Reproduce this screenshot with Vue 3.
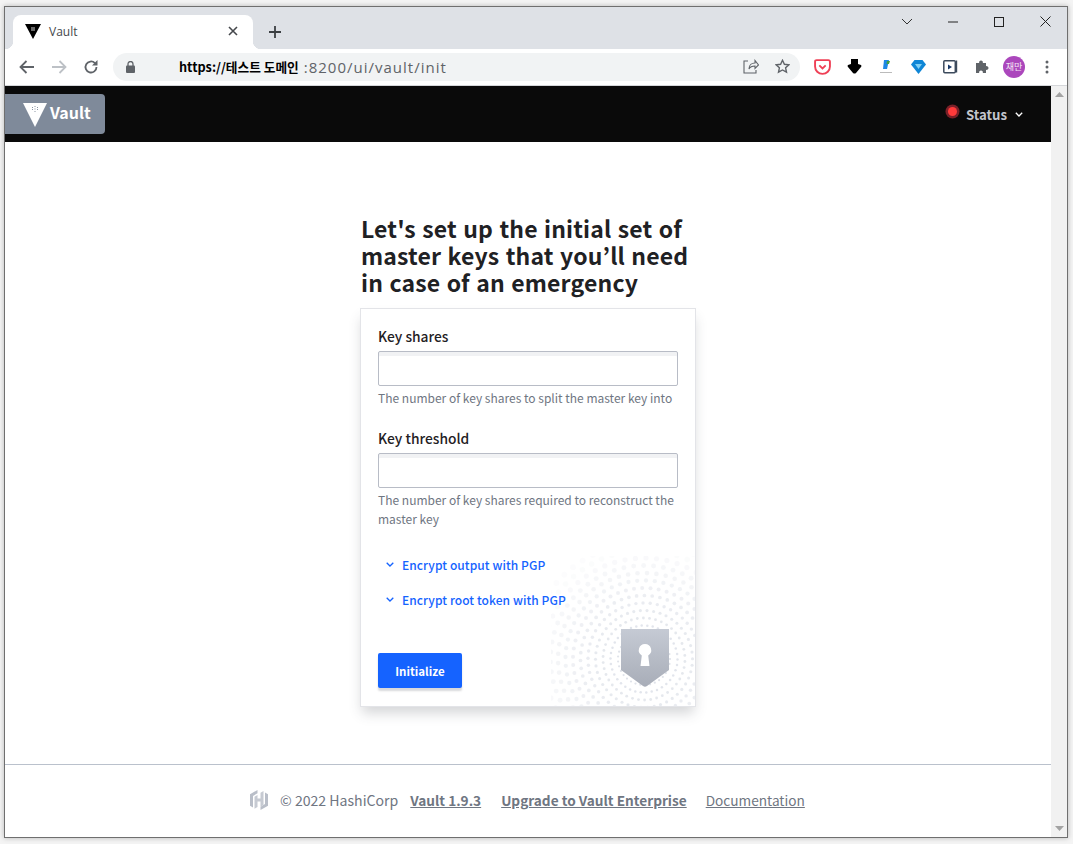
<template>
  <div class="screen">
    <div class="window">
      <!-- browser chrome -->
      <div class="tabstrip">
        <div class="tab">
          <svg class="favicon" width="16" height="16" viewBox="0 0 16 16">
            <path d="M0 1h16L8 16z" fill="#000" />
            <rect x="6" y="4" width="4" height="4" fill="#666" />
          </svg>
          <span class="tab-title">Vault</span>
          <svg class="tab-close" width="10" height="10" viewBox="0 0 10 10">
            <path d="M1 1l8 8M9 1l-8 8" stroke="#45484c" stroke-width="1.6" />
          </svg>
        </div>
        <svg class="new-tab" width="14" height="14" viewBox="0 0 14 14">
          <path d="M7 1v12M1 7h12" stroke="#3c4043" stroke-width="1.8" />
        </svg>
        <div class="win-controls">
          <svg width="12" height="8" viewBox="0 0 12 8"><path d="M1 1l5 5 5-5" fill="none" stroke="#333" /></svg>
          <svg width="10" height="10" viewBox="0 0 10 10"><path d="M0 5h10" stroke="#222" /></svg>
          <svg width="10" height="10" viewBox="0 0 10 10"><rect x=".5" y=".5" width="9" height="9" fill="none" stroke="#222" /></svg>
          <svg width="11" height="11" viewBox="0 0 11 11"><path d="M.5.5l10 10M10.5.5l-10 10" stroke="#222" /></svg>
        </div>
      </div>
      <div class="toolbar">
        <div class="nav-buttons">
          <svg width="16" height="14" viewBox="0 0 16 14"><path d="M15 7H2M7.500 1L1.500 7l6 6" fill="none" stroke="#5f6368" stroke-width="1.800" /></svg>
          <svg width="16" height="14" viewBox="0 0 16 14"><path d="M1 7h13M8.500 1l6 6-6 6" fill="none" stroke="#bdc1c6" stroke-width="1.800" /></svg>
          <svg width="16" height="16" viewBox="0 0 16 16"><path d="M13.500 8a5.500 5.500 0 1 1-1.600-3.900" fill="none" stroke="#5f6368" stroke-width="1.800" /><path d="M14.500 1v5.500H9z" fill="#5f6368" /></svg>
        </div>
        <div class="urlbar">
          <svg width="9" height="12" viewBox="0 0 9 12"><rect y="4.500" width="9" height="7.500" rx="1" fill="#5f6368" /><path d="M2 5V3a2.500 2.500 0 0 1 5 0v2" fill="none" stroke="#5f6368" stroke-width="1.300" /></svg>
          <span class="url-host">https://테스트 도메인</span>
          <span class="url-path">:8200/ui/vault/init</span>
          <svg class="url-share" width="16" height="15" viewBox="0 0 16 15"><path d="M5 2H1v12h12v-3M6 10c0-4 3-6 6-6V1.500L15.500 6 12 9.500V7c-3 0-5 1-6 3z" fill="none" stroke="#5f6368" stroke-width="1.100" /></svg>
          <svg class="url-star" width="15" height="15" viewBox="0 0 15 15"><path d="M7.500 1.300l1.900 4 4.400.5-3.200 3 .9 4.400-4-2.200-4 2.200.9-4.400-3.200-3 4.400-.5z" fill="none" stroke="#5f6368" stroke-width="1.400" /></svg>
        </div>
        <div class="extensions">
          <svg width="17" height="16" viewBox="0 0 16 15"><path d="M1 2.500q0-1.500 1.500-1.500h11q1.500 0 1.500 1.500V7a7 7 0 0 1-14 0z" fill="none" stroke="#ef4056" stroke-width="1.800" /><path d="M5 6l3 2.800L11 6" fill="none" stroke="#ef4056" stroke-width="1.800" /></svg>
          <svg width="15" height="15" viewBox="0 0 15 15"><path d="M4 0h7v5l3 1q1 1 0 2l-5 6q-1.500 1-3 0L1 8q-1-1 0-2l3-1z" fill="#000" /></svg>
          <svg width="14" height="16" viewBox="0 0 14 16"><path d="M5 1h5L8 10H4z" fill="#1e88e5" /><path d="M8 2h3l-1 3H7.500z" fill="#43a047" /><path d="M1 13h12v1H1z" fill="#bbb" /></svg>
          <svg width="15" height="14" viewBox="0 0 15 14"><path d="M3.500 0h8L15 4.500 7.500 14 0 4.500z" fill="#0f86d6" /><path d="M4 4h7L7.500 9z" fill="#7fd0f5" /></svg>
          <svg width="15" height="15" viewBox="0 0 15 15"><rect x=".8" y="1.800" width="11.500" height="12" rx="1" fill="none" stroke="#3c4a5c" stroke-width="1.500" /><path d="M13 1.500h1.200v12H13z" fill="#3c4a5c" /><path d="M5 5.500l4 2.500-4 2.500z" fill="#1a3a6a" /></svg>
          <svg width="15" height="15" viewBox="0 0 15 15"><path d="M1 4h3.200a1.900 1.900 0 1 1 3.600 0H11v3.200a1.900 1.900 0 1 1 0 3.600V14H7.800a1.900 1.900 0 1 0-3.600 0H1z" fill="#5f6368" /></svg>
          <div class="avatar">재만</div>
          <svg width="4" height="14" viewBox="0 0 4 14"><circle cx="2" cy="2" r="1.500" fill="#5f6368" /><circle cx="2" cy="7" r="1.500" fill="#5f6368" /><circle cx="2" cy="12" r="1.500" fill="#5f6368" /></svg>
        </div>
      </div>

      <div class="viewport">
        <div class="page">
          <header class="navbar">
            <a class="brand">
              <svg width="24" height="24" viewBox="0 0 24 24">
                <path d="M0 0h24L12 24z" fill="#fff" />
                <g fill="#8a94a3">
                  <rect x="9" y="4" width="1" height="1" /><rect x="11.500" y="3" width="1" height="1" /><rect x="14" y="4" width="1" height="1" />
                  <rect x="9" y="6" width="1" height="1" /><rect x="11.500" y="5.500" width="1" height="1" /><rect x="14" y="6" width="1" height="1" />
                  <rect x="11.500" y="8" width="1" height="1" />
                </g>
              </svg>
              <span>Vault</span>
            </a>
            <div class="status">
              <span class="status-dot"></span>
              <span class="status-label">Status</span>
              <svg width="8" height="5" viewBox="0 0 8 5"><path d="M.8.800L4 4 7.200.800" fill="none" stroke="#fff" stroke-width="1.300" /></svg>
            </div>
          </header>

          <main class="main">
            <div class="column">
              <h1 class="title">Let's set up the initial set of master keys that you’ll need in case of an emergency</h1>
              <form class="card" @submit.prevent>
                <svg class="dots" width="144" height="150" viewBox="0 0 144 150">
                  <circle v-for="(d, i) in dots" :key="i" :cx="d.x" :cy="d.y" :r="d.r" :fill="d.fill" />
                </svg>
                <svg class="shield" width="48" height="58" viewBox="0 0 48 58">
                  <defs>
                    <linearGradient id="shieldFill" x1="0" y1="0" x2="0" y2="1">
                      <stop offset="0" stop-color="#c5cad4" />
                      <stop offset="1" stop-color="#a8adb8" />
                    </linearGradient>
                  </defs>
                  <path d="M0 0h48v41L26 57q-2 1.400-4 0L0 41z" fill="url(#shieldFill)" />
                  <path d="M24 15a6.200 6.200 0 0 1 3.200 11.500L28.500 37h-9l1.300-10.500A6.200 6.200 0 0 1 24 15z" fill="#fff" />
                </svg>

                <label class="field-label" for="shares">Key shares</label>
                <input id="shares" class="input" type="text" />
                <p class="help">The number of key shares to split the master key into</p>

                <label class="field-label second" for="threshold">Key threshold</label>
                <input id="threshold" class="input" type="text" />
                <p class="help">The number of key shares required to reconstruct the master key</p>

                <div class="toggles">
                  <a v-for="t in toggles" :key="t" class="toggle">
                    <svg width="8" height="5" viewBox="0 0 8 5"><path d="M.7.700L4 4 7.300.700" fill="none" stroke="#1563ff" stroke-width="1.300" /></svg>
                    {{ t }}
                  </a>
                </div>

                <button class="submit" type="submit">Initialize</button>
              </form>
            </div>
          </main>

          <footer class="footer">
            <svg width="18" height="20" viewBox="0 0 18 20">
              <path d="M7.500 0L0 4.300v11.400l3 1.700V5.900l4.500-2.600zM10.500 20l7.500-4.300V4.300l-3-1.700v11.500l-4.500 2.600z" fill="#b9bec8" />
              <path d="M7.500 5v3.500h3V2.800l3-1.700V15l-3 1.800v-5.300h-3V17l-3 1.800V6.800z" fill="#c6cad2" />
            </svg>
            <span class="copyright">© 2022 HashiCorp</span>
            <a class="foot-link strong version">Vault 1.9.3</a>
            <a class="foot-link strong upgrade">Upgrade to Vault Enterprise</a>
            <a class="foot-link docs">Documentation</a>
          </footer>
        </div>
        <div class="scrollbar">
          <svg width="9" height="5" viewBox="0 0 9 5"><path d="M4.500 0L9 5H0z" fill="#a3a3a3" /></svg>
          <svg width="9" height="5" viewBox="0 0 9 5"><path d="M0 0h9L4.500 5z" fill="#a3a3a3" /></svg>
        </div>
      </div>
    </div>
  </div>
</template>

<script setup>
const toggles = ['Encrypt output with PGP', 'Encrypt root token with PGP']

// concentric rings of dots behind the shield, fading outwards
const cx = 93
const cy = 103
const dots = []
for (let ring = 0; ring < 13; ring++) {
  const radius = 26 + ring * 7.5
  const count = Math.round((2 * Math.PI * radius) / (5 + ring * 0.55))
  for (let n = 0; n < count; n++) {
    const a = (n / count) * Math.PI * 2 + ring * 0.18
    const x = cx + Math.cos(a) * radius
    const y = cy + Math.sin(a) * radius
    if (x < -3 || x > 146 || y < -3 || y > 153) continue
    const fade = Math.max(0.1, 1 - ring / 12.5)
    dots.push({
      x: +x.toFixed(1),
      y: +y.toFixed(1),
      r: +(1.1 + ring * 0.15).toFixed(2),
      fill: `rgba(224, 227, 234, ${fade.toFixed(2)})`
    })
  }
}
</script>

<style scoped>
.screen {
  width: 1073px;
  height: 844px;
  box-sizing: border-box;
  padding: 6px 0 0 4px;
  background: #f4f4f4;
  overflow: hidden;
  font-family: "Noto Sans CJK KR", "Noto Sans", sans-serif;
}

.window {
  width: 1064px;
  height: 832px;
  box-sizing: border-box;
  border: 1px solid #6f6f6f;
  box-shadow: 0 0 5px rgba(0, 0, 0, 0.25);
  display: flex;
  flex-direction: column;
  background: #fff;
}

.tabstrip {
  height: 42px;
  flex: none;
  background: #dee1e6;
  display: flex;
  align-items: flex-end;
  padding-left: 8px;
}

.tab {
  position: relative;
  width: 240px;
  height: 34px;
  box-sizing: border-box;
  padding: 0 15px 2px 12px;
  background: #fff;
  border-radius: 8px 8px 0 0;
  display: flex;
  align-items: center;
}

.tab::before,
.tab::after {
  content: "";
  position: absolute;
  bottom: 0;
  width: 8px;
  height: 8px;
}

.tab::before {
  left: -8px;
  background: radial-gradient(circle at 0 0, #dee1e6 8px, #fff 8.5px);
}

.tab::after {
  right: -8px;
  background: radial-gradient(circle at 100% 0, #dee1e6 8px, #fff 8.5px);
}

.tab-title {
  margin-left: 8px;
  font: 12px "Open Sans", sans-serif;
  color: #45484c;
}

.tab-close {
  margin-left: auto;
}

.new-tab {
  margin: 0 0 10px 15px;
}

.win-controls {
  margin-left: auto;
  margin-right: -1px;
  align-self: flex-start;
  display: grid;
  grid-template-columns: repeat(4, 46px);
  justify-items: center;
  align-items: center;
  padding-top: 9px;
}

.toolbar {
  height: 37px;
  flex: none;
  box-sizing: border-box;
  background: #fff;
  border-bottom: 1px solid #d5d7da;
  display: flex;
  align-items: center;
  padding: 0 0 1px 6px;
}

.nav-buttons {
  display: grid;
  grid-template-columns: repeat(3, 32px);
  justify-items: center;
  align-items: center;
}

.urlbar {
  width: 687px;
  height: 28px;
  box-sizing: border-box;
  margin-left: 6px;
  padding: 0 10px 0 13px;
  background: #f1f3f4;
  border-radius: 14px;
  display: flex;
  align-items: center;
}

.url-host {
  margin-left: 44px;
  font: 600 12.700px "Noto Sans CJK KR", sans-serif;
  color: #000;
}

.url-path {
  margin-left: 5px;
  font: 15px "Open Sans", sans-serif;
  letter-spacing: 1px;
  color: #5f6368;
}

.url-share {
  margin-left: auto;
}

.url-star {
  margin-left: 16px;
}

.extensions {
  margin-left: 6px;
  display: grid;
  grid-template-columns: repeat(7, 32px) 34px;
  justify-items: center;
  align-items: center;
}

.avatar {
  width: 22px;
  height: 22px;
  border-radius: 50%;
  background: #ab47bc;
  color: #f3e5f5;
  font-size: 9px;
  line-height: 22px;
  text-align: center;
}

.viewport {
  flex: 1;
  min-height: 0;
  display: flex;
}

.page {
  flex: 1;
  min-width: 0;
  display: flex;
  flex-direction: column;
}

.scrollbar {
  width: 16px;
  flex: none;
  background: #f1f1f1;
  display: flex;
  flex-direction: column;
  justify-content: space-between;
  align-items: center;
  padding: 6px 0;
  box-sizing: border-box;
}

.navbar {
  height: 56px;
  flex: none;
  box-sizing: border-box;
  background: #0a0a0a;
  display: flex;
  align-items: flex-start;
  justify-content: space-between;
  padding-top: 8px;
}

.brand {
  width: 100px;
  height: 40px;
  box-sizing: border-box;
  padding: 8px 0 0 18px;
  background: #7f8a9a;
  border-radius: 0 4px 4px 0;
  display: flex;
  align-items: flex-start;
  gap: 3px;
  color: #fff;
  font-size: 16px;
  font-weight: 700;
  line-height: 20px;
}

.brand svg {
  margin-top: 1px;
}

.status {
  display: flex;
  align-items: center;
  margin: 10px 28px 0 0;
  color: #c2c5cc;
  font-size: 13.200px;
  font-weight: 700;
  height: 20px;
}

.status-dot {
  width: 9px;
  height: 9px;
  margin: -5px 9px 0 0;
  border-radius: 50%;
  background: #ff3a3a;
  box-shadow: 0 0 0 2.500px #7a2028;
}

.status-label {
  margin-right: 8px;
}

.main {
  flex: 1;
  display: flex;
  justify-content: center;
  padding-top: 73px;
}

.column {
  width: 336px;
}

.title {
  margin: 0 0 12px 1px;
  font-size: 23px;
  line-height: 27px;
  font-weight: 700;
  color: #1f2124;
  letter-spacing: 0.16px;
  word-spacing: 1px;
}

.card {
  position: relative;
  height: 399px;
  box-sizing: border-box;
  padding: 17px 18px 0 17px;
  background: #fff;
  border: 1px solid #e3e4e8;
  box-shadow: 0 8px 12px -2px rgba(60, 65, 75, 0.22);
}

.dots {
  position: absolute;
  right: 0;
  bottom: 0;
}

.shield {
  position: absolute;
  right: 26px;
  bottom: 19px;
}

.field-label {
  display: block;
  height: 20px;
  font-size: 13.800px;
  line-height: 20px;
  font-weight: 500;
  color: #1f2124;
}

.field-label.second {
  margin-top: 21px;
}

.input {
  display: block;
  width: 300px;
  height: 35px;
  margin-top: 5px;
  box-sizing: border-box;
  border: 1px solid #b8bcc6;
  border-radius: 2px;
  background: #fff;
  box-shadow: inset 0 4px 0 #f1f2f4;
  outline: none;
}

.help {
  margin: 2px 0 0;
  font-size: 12px;
  line-height: 19px;
  color: #6f7682;
}

.toggles {
  position: relative;
  margin-top: 26px;
  display: flex;
  flex-direction: column;
  gap: 15px;
}

.toggle {
  display: flex;
  align-items: center;
  height: 20px;
  padding-left: 8px;
  gap: 8px;
  font-size: 12px;
  letter-spacing: 0.07px;
  font-weight: 500;
  color: #1563ff;
}

.submit {
  position: relative;
  display: block;
  width: 84px;
  height: 35px;
  margin-top: 44px;
  border: none;
  border-radius: 2px;
  background: #1563ff;
  box-shadow: 0 3px 2px rgba(60, 65, 75, 0.2);
  color: #fff;
  font: 600 11.500px "Noto Sans CJK KR", sans-serif;
}

.footer {
  height: 73px;
  flex: none;
  box-sizing: border-box;
  border-top: 1px solid #bac1cc;
  display: flex;
  align-items: center;
  padding: 0 0 3px 245px;
  font-size: 13.650px;
  color: #6f7682;
}

.copyright {
  margin-left: 12px;
  font-size: 14.100px;
}

.foot-link {
  text-decoration: underline;
}

.strong {
  font-weight: 700;
}

.version {
  margin-left: 12px;
}

.upgrade {
  margin-left: 20px;
}

.docs {
  margin-left: 19px;
}
</style>

<style>
html,
body {
  margin: 0;
  padding: 0;
  overflow: hidden;
}
</style>
